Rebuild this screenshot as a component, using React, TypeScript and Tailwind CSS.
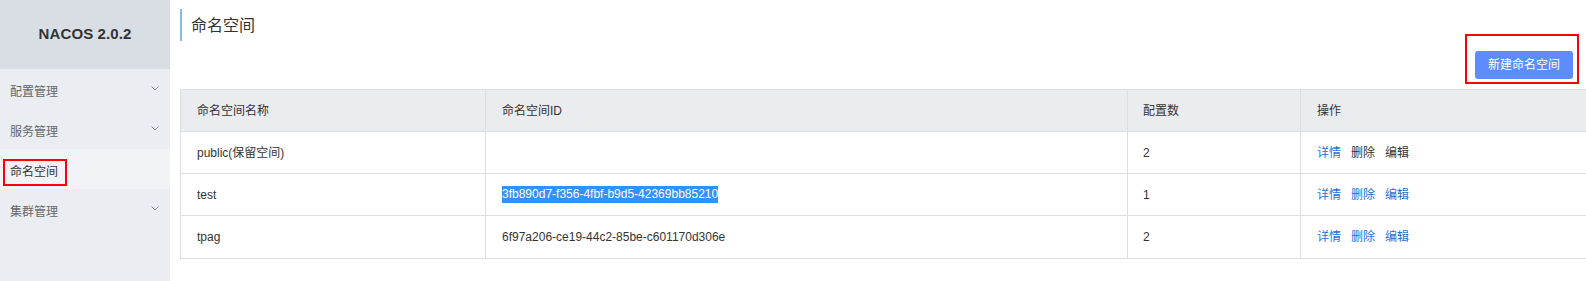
import React from "react";

const FONT = { fontFamily: '"Liberation Sans", "Noto Sans CJK SC", sans-serif' };

function Chevron() {
  return (
    <svg width="8" height="5" viewBox="0 0 8 5" className="shrink-0">
      <path d="M0.5 0.5 L4 4 L7.5 0.5" fill="none" stroke="#8a8f99" strokeWidth="1" />
    </svg>
  );
}

const menu = [
  { label: "配置管理", chevron: true },
  { label: "服务管理", chevron: true },
  { label: "命名空间", chevron: false, active: true },
  { label: "集群管理", chevron: true },
];

const rows = [
  { name: "public(保留空间)", id: "", count: "2", locked: true },
  { name: "test", id: "3fb890d7-f356-4fbf-b9d5-42369bb85210", count: "1", selected: true },
  { name: "tpag", id: "6f97a206-ce19-44c2-85be-c601170d306e", count: "2" },
];

export default function App() {
  return (
    <div className="flex w-[1586px] h-[281px] bg-white overflow-hidden text-[#333]" style={FONT}>
      <aside className="w-[170px] shrink-0 bg-[#eaedf1] flex flex-col">
        <div className="h-[69px] bg-[#d9dee4] flex items-center justify-center">
          <span className="text-[15px] font-bold text-[#333] tracking-[0.1px]">NACOS 2.0.2</span>
        </div>
        {menu.map((m) => (
          <div
            key={m.label}
            className={`relative h-[40px] flex items-center pl-[10px] pt-[6px] text-[12px] ${
              m.active ? "bg-[#f2f3f7] text-[#333]" : "text-[#666]"
            }`}
          >
            {m.active ? (
              <span className="relative">
                {m.label}
                <span className="absolute left-[-7px] top-[-4px] w-[64px] h-[27px] border-2 border-[#f00]" />
              </span>
            ) : (
              <span>{m.label}</span>
            )}
            {m.chevron && (
              <span className="absolute right-[11px] top-[17px] flex">
                <Chevron />
              </span>
            )}
          </div>
        ))}
      </aside>
      <main className="flex-1 pl-[10px] pt-[9px] flex flex-col">
        <div className="h-[32px] border-l-2 border-[#8cb8e2] pl-[9px] flex items-center text-[16px] text-[#333] pt-[1px]">
          命名空间
        </div>
        <div className="flex justify-end pr-[13px] mt-[10px]">
          <div className="relative">
            <button className="w-[98px] h-[28px] rounded-[3px] bg-[#5b8dfc] text-white text-[12px]">
              新建命名空间
            </button>
            <span className="absolute left-[-10px] top-[-17px] w-[114px] h-[50px] border-2 border-[#f00]" />
          </div>
        </div>
        <div className="mt-[10px] border-l border-t border-b border-[#dcdee3] text-[12px]">
          <div className="flex h-[42px] bg-[#ebecf0] border-b border-[#dcdee3] items-center">
            <div className="w-[305px] pl-[16px] h-full flex items-center border-r border-[#dcdee3]">命名空间名称</div>
            <div className="w-[642px] pl-[16px] h-full flex items-center border-r border-[#dcdee3]">命名空间ID</div>
            <div className="w-[173px] pl-[15px] h-full flex items-center border-r border-[#dcdee3]">配置数</div>
            <div className="flex-1 pl-[16px] h-full flex items-center">操作</div>
          </div>
          {rows.map((r, i) => (
            <div
              key={r.name}
              className={`flex h-[42px] items-center ${i < rows.length - 1 ? "border-b border-[#dcdee3]" : ""}`}
            >
              <div className="w-[305px] pl-[16px] h-full flex items-center border-r border-[#dcdee3]">{r.name}</div>
              <div className="w-[642px] pl-[16px] h-full flex items-center border-r border-[#dcdee3]">
                {r.selected ? (
                  <span className="bg-[#3390ff] text-white leading-[17px]">{r.id}</span>
                ) : (
                  r.id
                )}
              </div>
              <div className="w-[173px] pl-[15px] h-full flex items-center border-r border-[#dcdee3] text-[#333]">
                {r.count}
              </div>
              <div className="flex-1 pl-[16px] h-full flex items-center gap-[10px]">
                <span className="text-[#1f6fd6]">详情</span>
                <span className={r.locked ? "text-[#333]" : "text-[#1f6fd6]"}>删除</span>
                <span className={r.locked ? "text-[#333]" : "text-[#1f6fd6]"}>编辑</span>
              </div>
            </div>
          ))}
        </div>
      </main>
    </div>
  );
}
